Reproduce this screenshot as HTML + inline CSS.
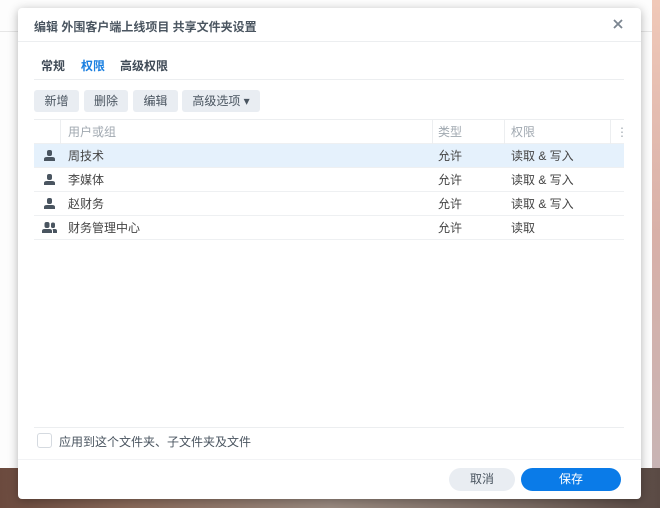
<!DOCTYPE html>
<html><head><meta charset="utf-8"><style>
*{margin:0;padding:0;box-sizing:border-box}
body{width:660px;height:508px;overflow:hidden;position:relative;background:#fafafa;font-family:"Liberation Sans","Noto Sans CJK SC",sans-serif;font-size:12px;color:#333}
.photo{position:absolute;left:0;top:468px;width:660px;height:40px;background:linear-gradient(90deg,#6b4a3e,#8a6a5a 20%,#9a8a80 50%,#7a6a62 80%,#5a4a44)}
.rstrip{position:absolute;left:652px;top:0;width:8px;height:470px;background:linear-gradient(180deg,#f0c8b8,#d8b0a8 50%,#c8b4b4)}
.bgpanel{position:absolute;left:0;top:0;width:652px;height:468px;background:#fdfdfd}
.bgpanel::after{content:"";position:absolute;left:0;top:31px;width:652px;height:1px;background:#e6e6e6}
.dlg{position:absolute;left:18px;top:8px;width:623px;height:491px;background:#fff;border-radius:4px;box-shadow:0 2px 10px rgba(0,0,0,.3)}
.title{position:absolute;left:16px;top:10px;font-size:12px;font-weight:bold;color:#4a5560}
.close{position:absolute;right:18px;top:11px}
.hl{position:absolute;height:1px;background:#eceef0}
.tab{position:absolute;top:49px;font-size:12px;font-weight:bold;color:#3f4a56}
.btn{position:absolute;top:82px;height:22px;background:#e9edf2;border-radius:3px;color:#4a5560;font-size:12px;line-height:22px;text-align:center}
.row{position:absolute;left:16px;width:590px;height:24px;line-height:24px;border-bottom:1px solid #eef0f2;color:#444}
.row span{position:absolute;top:0}
.ic{position:absolute;left:10px;top:6px}
.cb{position:absolute;left:19px;top:425px;width:15px;height:15px;border:1px solid #d5dae0;border-radius:3px}
</style></head><body>
<div class="bgpanel"></div><div class="rstrip"></div><div class="photo"></div>
<div class="dlg">
<div class="title">编辑 外围客户端上线项目 共享文件夹设置</div>
<svg class="close" width="10" height="10" viewBox="0 0 10 10"><path d="M1 1L9 9M9 1L1 9" stroke="#7b8590" stroke-width="1.8"/></svg>
<div class="hl" style="left:0;top:33px;width:623px"></div>
<div class="tab" style="left:23px">常规</div>
<div class="tab" style="left:63px;color:#1a7fe0">权限</div>
<div class="tab" style="left:102px">高级权限</div>
<div class="hl" style="left:16px;top:71px;width:590px"></div>
<div class="btn" style="left:16px;width:45px">新增</div>
<div class="btn" style="left:66px;width:44px">删除</div>
<div class="btn" style="left:115px;width:45px">编辑</div>
<div class="btn" style="left:164px;width:78px">高级选项 ▾</div>
<div class="row" style="top:111px;height:25px;border-top:1px solid #eceef0;color:#a0a8b0">
<span style="left:26px;width:1px;height:24px;background:#eceef0"></span>
<span style="left:34px">用户或组</span>
<span style="left:398px;width:1px;height:24px;background:#eceef0"></span>
<span style="left:404px">类型</span>
<span style="left:470px;width:1px;height:24px;background:#eceef0"></span>
<span style="left:477px">权限</span>
<span style="left:576px;width:1px;height:24px;background:#eceef0"></span>
<span style="left:582px">⋮</span>
</div>
<div class="row" style="top:136px;background:#e5f1fc">
<svg class="ic" width="11" height="11" viewBox="0 0 11 11"><rect x="3" y="0" width="5" height="6" rx="2" fill="#4a5560"/><path d="M0 11V9Q0 7 3 7H8Q11 7 11 9V11Z" fill="#4a5560"/></svg>
<span style="left:34px">周技术</span><span style="left:404px">允许</span><span style="left:477px">读取 &amp; 写入</span></div>
<div class="row" style="top:160px">
<svg class="ic" width="11" height="11" viewBox="0 0 11 11"><rect x="3" y="0" width="5" height="6" rx="2" fill="#4a5560"/><path d="M0 11V9Q0 7 3 7H8Q11 7 11 9V11Z" fill="#4a5560"/></svg>
<span style="left:34px">李媒体</span><span style="left:404px">允许</span><span style="left:477px">读取 &amp; 写入</span></div>
<div class="row" style="top:184px">
<svg class="ic" width="11" height="11" viewBox="0 0 11 11"><rect x="3" y="0" width="5" height="6" rx="2" fill="#4a5560"/><path d="M0 11V9Q0 7 3 7H8Q11 7 11 9V11Z" fill="#4a5560"/></svg>
<span style="left:34px">赵财务</span><span style="left:404px">允许</span><span style="left:477px">读取 &amp; 写入</span></div>
<div class="row" style="top:208px">
<svg class="ic" width="15" height="11" viewBox="0 0 15 11" style="left:8px"><rect x="2.5" y="0" width="5" height="6" rx="2" fill="#4a5560"/><path d="M0 11V9Q0 7 2.5 7H7.5Q10 7 10 9V11Z" fill="#4a5560"/><rect x="9" y="0.5" width="4" height="5.5" rx="1.8" fill="#4a5560"/><path d="M11 11V9Q11 7.5 10.5 7H13Q15 7 15 9V11Z" fill="#4a5560"/></svg>
<span style="left:34px">财务管理中心</span><span style="left:404px">允许</span><span style="left:477px">读取</span></div>
<div class="hl" style="left:16px;top:419px;width:590px"></div>
<div class="cb"></div>
<div style="position:absolute;left:41px;top:425px;color:#4a5560">应用到这个文件夹、子文件夹及文件</div>
<div class="hl" style="left:0;top:451px;width:623px;background:#f2f3f5"></div>
<div style="position:absolute;left:431px;top:460px;width:66px;height:23px;border-radius:12px;background:#e9edf2;color:#4a5560;text-align:center;line-height:23px">取消</div>
<div style="position:absolute;left:503px;top:460px;width:100px;height:23px;border-radius:12px;background:#0a7be8;color:#fff;text-align:center;line-height:23px">保存</div>
</div>
</body></html>
